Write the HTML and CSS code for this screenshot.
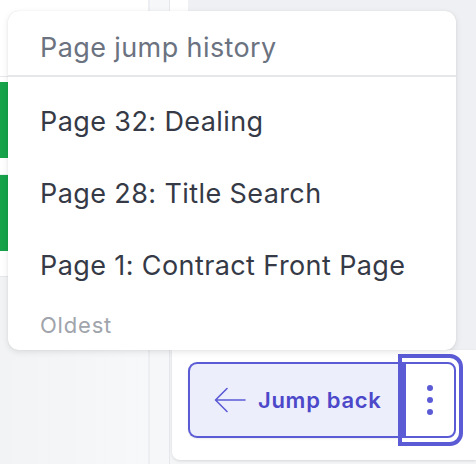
FILE: index.html
```html
<!DOCTYPE html>
<html>
<head>
<meta charset="utf-8">
<link rel="stylesheet" href="styles.css">
</head>
<body>
<div class="app">
  <div class="left">
    <div class="left-head"></div>
    <div class="left-space"></div>
    <div class="left-row active"></div>
    <div class="left-gap"></div>
    <div class="left-row active"></div>
    <div class="left-tail"></div>
    <div class="left-foot"></div>
  </div>
  <div class="strip"></div>
  <div class="main">
    <div class="main-top">
      <div class="main-pad"></div>
      <div class="main-fill"></div>
    </div>
    <div class="card">
      <div class="btn-group">
        <button class="jump-btn">
          <svg class="arrow" width="32" height="26" viewBox="0 0 32 26" fill="none">
            <path d="M31 13H2M13 1.5L1.5 13L13 24.5" stroke="#5b5bd6" stroke-width="1.6" stroke-linecap="round" stroke-linejoin="round"/>
          </svg>
          <span>Jump back</span>
        </button>
        <div class="kebab-ring">
          <button class="kebab">
            <span class="dot"></span><span class="dot"></span><span class="dot"></span>
          </button>
        </div>
      </div>
    </div>
  </div>
</div>

<div class="menu">
  <div class="menu-head">Page jump history</div>
  <ul class="menu-list">
    <li class="menu-item">Page 32: Dealing</li>
    <li class="menu-item">Page 28: Title Search</li>
    <li class="menu-item">Page 1: Contract Front Page</li>
  </ul>
  <div class="menu-foot">Oldest</div>
</div>
</body>
</html>
```

FILE: styles.css
```css
* { box-sizing: border-box; }
html, body {
  margin: 0;
  padding: 0;
  width: 476px;
  height: 464px;
  overflow: hidden;
  font-family: "Inter", "Noto Sans", sans-serif;
}
body { position: relative; background: #eff0f3; }

.app {
  display: flex;
  height: 464px;
}

.left {
  width: 148px;
  display: flex;
  flex-direction: column;
  background: #ffffff;
}
.left-head { height: 77px; border-bottom: 1px solid #e5e7eb; }
.left-space { height: 5px; }
.left-gap { height: 17px; border-bottom: 1px solid #eeeff1; }
.left-row { height: 76px; }
.left-row.active { border-left: 8px solid #16a34a; }
.left-tail { height: 26px; border-bottom: 1px solid #e5e7eb; }
.left-foot { flex: 1; background: linear-gradient(90deg, #f2f3f5, #f7f8f9); }

.strip {
  width: 22px;
  background: #f6f7f9;
  border-left: 2px solid #eceef1;
  border-right: 1px solid #e5e7eb;
}

.main {
  flex: 1;
  display: flex;
  flex-direction: column;
  background: #f4f5f7;
}
.main-top { flex: 1; display: flex; }
.main-pad { width: 18px; background: #ffffff; }
.main-fill { flex: 1; background: #eff0f3; }

.card {
  height: 110px;
  margin: 0 0 4px 2px;
  background: #ffffff;
  border-radius: 0 0 0 8px;
  box-shadow: 0 1px 3px rgba(0,0,0,0.12);
  padding: 4px 0 0 16px;
}

.btn-group { display: flex; align-items: center; }

.jump-btn {
  width: 210px;
  height: 76px;
  display: flex;
  align-items: center;
  gap: 12px;
  padding: 0 0 0 24px;
  margin: 0;
  border: 2px solid #5b5bd6;
  border-right: none;
  border-radius: 9px 0 0 9px;
  background: #eceefc;
  color: #4c48c9;
  font-family: "Inter", sans-serif;
  font-size: 22px;
  font-weight: 600;
  letter-spacing: 0.7px;
  white-space: nowrap;
  box-shadow: 0 1px 2px rgba(0,0,0,0.08);
}
.arrow { display: block; flex: none; }

.kebab-ring {
  width: 65px;
  height: 92px;
  border: 4px solid #5b5bd6;
  border-radius: 0 13px 13px 0;
  padding: 4px 3px 4px 0;
  background: #ffffff;
}
.kebab {
  width: 100%;
  height: 100%;
  margin: 0;
  padding: 0;
  border: 2px solid #5b5bd6;
  border-left-width: 4px;
  border-radius: 0 8px 8px 0;
  background: #ffffff;
  display: flex;
  flex-direction: column;
  align-items: center;
  justify-content: center;
  gap: 6px;
}
.dot {
  width: 6px;
  height: 6px;
  border-radius: 50%;
  background: #5b5bd6;
}

.menu {
  position: absolute;
  left: 8px;
  top: 11px;
  width: 448px;
  height: 339px;
  background: #ffffff;
  border-radius: 11px;
  box-shadow: 0 2px 6px rgba(0,0,0,0.10), 0 0 1px rgba(0,0,0,0.15);
  overflow: hidden;
}
.menu-head {
  height: 66px;
  padding: 21px 32px 0;
  font-size: 27px;
  line-height: 32px;
  letter-spacing: 0.4px;
  color: #6b7280;
  border-bottom: 2px solid #e6e7ea;
}
.menu-list {
  list-style: none;
  margin: 0;
  padding: 9px 0 0;
}
.menu-item {
  height: 72px;
  padding: 20px 32px;
  font-size: 27px;
  line-height: 32px;
  letter-spacing: 0.4px;
  color: #353a46;
}
.menu-foot {
  margin-top: 9px;
  padding: 0 32px;
  font-size: 22px;
  line-height: 28px;
  letter-spacing: 0.8px;
  color: #a0a4ab;
}
```
